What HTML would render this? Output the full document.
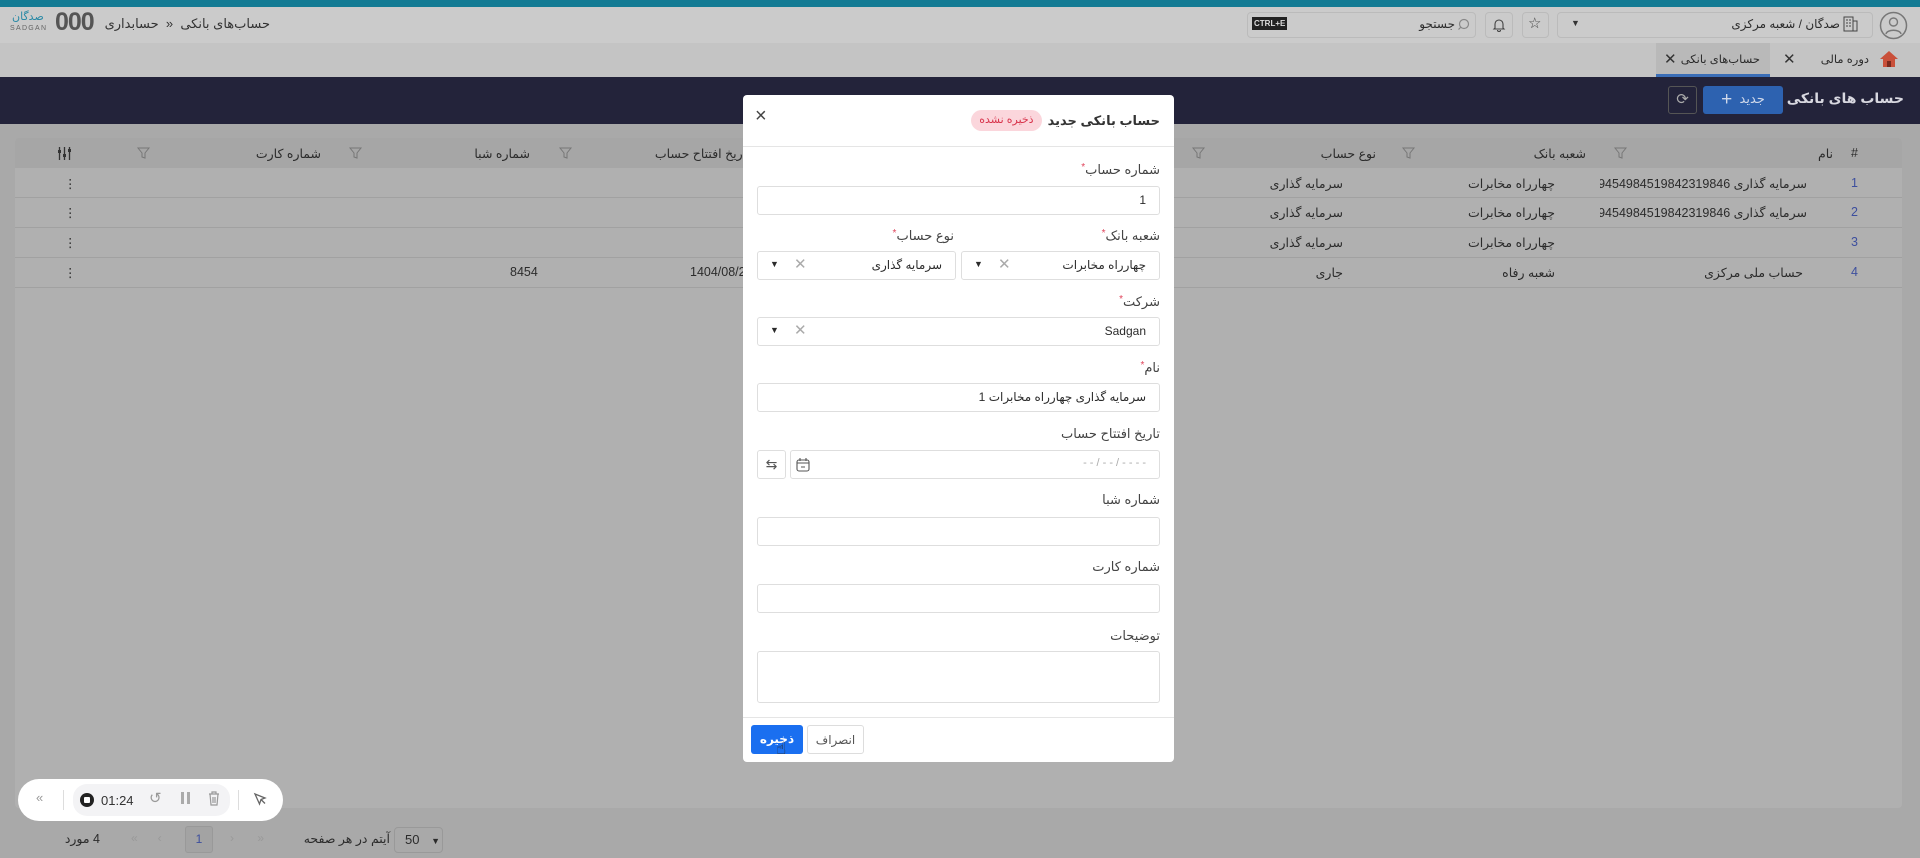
<!DOCTYPE html>
<html><head><meta charset="utf-8"><style>
*{box-sizing:border-box;margin:0;padding:0}
body{width:1920px;height:858px;overflow:hidden;position:relative;background:#a9a9a9;font-family:"Liberation Sans","DejaVu Sans","Noto Sans CJK SC",sans-serif;color:#2b2b2b;font-size:13px}
.a{position:absolute;white-space:nowrap}
.r{direction:rtl;text-align:right}
.hd{left:0;top:0;width:1920px;height:43px;background:#cbcbcb;border-top:7px solid #137b94;box-shadow:0 1px 2px rgba(0,0,0,.15)}
.tabs{left:0;top:43px;width:1920px;height:34px;background:#c4c4c4}
.band{left:0;top:77px;width:1920px;height:47px;background:#23233a}
.tbl{left:15px;top:138px;width:1887px;height:670px;background:#b0b0b0;border-radius:4px}
.th{left:15px;top:138px;width:1887px;height:30px;background:#a6a6a6;border-radius:4px 4px 0 0}
.row{left:15px;width:1887px;height:30px;border-bottom:1px solid #a1a1a1}
.c{position:absolute;white-space:nowrap;direction:rtl;font-size:12.5px}
.modal{left:743px;top:95px;width:431px;height:667px;background:#fff;border-radius:4px}
.lbl{position:absolute;right:14px;font-size:13px;color:#444;direction:rtl;white-space:nowrap}
.lbl b{color:#e0435a;font-weight:normal;font-size:10px;vertical-align:top}
.inp{position:absolute;border:1px solid #dedede;border-radius:3px;height:29px;background:#fff}
.inp span{white-space:nowrap}
.btn{position:absolute;border-radius:3px;font-size:12px;text-align:center;line-height:29px}
</style></head><body>
<div class="a hd"></div>
<!-- logo -->
<div class="a" style="left:12px;top:12px;font-size:11px;color:#2a8aa6;line-height:11px">صدگان</div>
<div class="a" style="left:10px;top:25px;font-size:7px;letter-spacing:1.3px;color:#666">SADGAN</div>
<div class="a" style="left:55px;top:8px;font-size:25px;font-weight:bold;color:#555;letter-spacing:-1px;font-family:'Liberation Sans'">000</div>
<div class="a r" style="right:1650px;top:16px;font-size:13px;color:#333">حساب‌های بانکی &nbsp;«&nbsp; حسابداری</div>
<!-- right header -->
<div class="a" style="left:1247px;top:12px;width:229px;height:26px;border:1px solid #bbb;border-radius:4px"></div>
<div class="a" style="left:1252px;top:17px;background:#222;color:#ddd;font-size:8px;padding:2px 2px;font-weight:bold">CTRL+E</div>
<div class="a r" style="right:465px;top:17px;font-size:12px">جستجو</div>
<svg class="a" style="left:1457px;top:18px" width="13" height="13" viewBox="0 0 13 13"><circle cx="7" cy="6" r="4.5" fill="none" stroke="#888" stroke-width="1.2"/><path d="M3.8 9.2 1.5 11.5" stroke="#888" stroke-width="1.2"/></svg>
<div class="a" style="left:1485px;top:12px;width:28px;height:26px;border:1px solid #bbb;border-radius:4px"></div>
<svg class="a" style="left:1492px;top:17px" width="14" height="15" viewBox="0 0 14 15"><path d="M3 11V7a4 4 0 0 1 8 0v4l1 1H2z M5.5 13a1.5 1.5 0 0 0 3 0" fill="none" stroke="#444" stroke-width="1.1"/></svg>
<div class="a" style="left:1522px;top:12px;width:27px;height:26px;border:1px solid #bbb;border-radius:4px"></div>
<div class="a" style="left:1528px;top:14px;font-size:15px;color:#444">☆</div>
<div class="a" style="left:1557px;top:12px;width:316px;height:26px;border:1px solid #bbb;border-radius:4px"></div>
<div class="a" style="left:1571px;top:18px;font-size:9px;color:#333">▼</div>
<div class="a r" style="right:80px;top:17px;font-size:12px">صدگان / شعبه مرکزی</div>
<svg class="a" style="left:1843px;top:16px" width="15" height="16" viewBox="0 0 15 16"><rect x="1" y="1" width="9" height="14" fill="none" stroke="#444"/><rect x="10" y="5" width="4" height="10" fill="none" stroke="#444"/><path d="M3 4h2M6 4h2M3 7h2M6 7h2M3 10h2M6 10h2" stroke="#444"/></svg>
<svg class="a" style="left:1879px;top:11px" width="29" height="29" viewBox="0 0 29 29"><circle cx="14.5" cy="14.5" r="13" fill="none" stroke="#777" stroke-width="1.5"/><circle cx="14.5" cy="11" r="4" fill="none" stroke="#777" stroke-width="1.4"/><path d="M7 23c1-5 14-5 15 0" fill="none" stroke="#777" stroke-width="1.4"/></svg>
<!-- tabs -->
<div class="a tabs"></div>
<div class="a" style="left:1656px;top:43px;width:114px;height:34px;background:#b9b9b9;border-bottom:3px solid #3b6eb7"></div>
<div class="a r" style="right:160px;top:52px;font-size:11.5px">حساب‌های بانکی</div>
<div class="a" style="left:1664px;top:50px;font-size:15px;color:#333">✕</div>
<div class="a r" style="right:51px;top:52px;font-size:11.5px">دوره مالی</div>
<div class="a" style="left:1783px;top:50px;font-size:15px;color:#333">✕</div>
<svg class="a" style="left:1879px;top:49px" width="20" height="20" viewBox="0 0 20 20"><path d="M10 2 1 10h3v8h12v-8h3z" fill="#c9503a"/><rect x="8" y="12" width="4" height="6" fill="#7a2a1e"/></svg>
<!-- band -->
<div class="a band"></div>
<div class="a" style="left:1703px;top:86px;width:80px;height:28px;background:#2d62b0;border-radius:3px;color:#cfd8ea;font-size:13px;line-height:26px;text-align:center;direction:rtl">جدید &nbsp;<span style="font-size:19px;vertical-align:-2px">+</span></div>
<div class="a" style="left:1668px;top:86px;width:29px;height:28px;border:1px solid #555;border-radius:3px;color:#aaa;text-align:center;line-height:26px;font-size:15px">⟳</div>
<div class="a r" style="right:16px;top:90px;font-size:14px;font-weight:bold;color:#d8d8e0;z-index:2">حساب های بانکی</div>
<!-- table -->
<div class="a tbl"></div>
<div class="a th"></div>
<div class="c" style="right:62px;top:146px">#</div>
<div class="c" style="right:87px;top:146px">نام</div>
<div class="c" style="right:334px;top:146px">شعبه بانک</div>
<div class="c" style="right:544px;top:146px">نوع حساب</div>
<div class="c" style="right:1170px;top:146px">تاریخ افتتاح حساب</div>
<div class="c" style="right:1390px;top:146px">شماره شبا</div>
<div class="c" style="right:1599px;top:146px">شماره کارت</div>
<svg class="a" style="left:57px;top:146px" width="15" height="15" viewBox="0 0 15 15"><path d="M2.5 1v13M7.5 1v13M12.5 1v13" stroke="#333" stroke-width="1.3"/><rect x="1" y="4" width="3" height="3" fill="#333"/><rect x="6" y="8" width="3" height="3" fill="#333"/><rect x="11" y="3" width="3" height="3" fill="#333"/></svg>
<svg class="a" style="left:0;top:0" width="1920" height="858"><g fill="none" stroke="#777" stroke-width="1"><path d="M1615 148h11l-4 5v5l-3-1v-4z"/><path d="M1403 148h11l-4 5v5l-3-1v-4z"/><path d="M1193 148h11l-4 5v5l-3-1v-4z"/><path d="M560 148h11l-4 5v5l-3-1v-4z"/><path d="M350 148h11l-4 5v5l-3-1v-4z"/><path d="M138 148h11l-4 5v5l-3-1v-4z"/></g></svg>
<div class="a row" style="top:168px"></div><div class="a row" style="top:198px"></div><div class="a row" style="top:228px"></div><div class="a row" style="top:258px"></div>
<div class="c" style="right:62px;top:176px;color:#3d4f9e">1</div>
<div class="a" style="left:1600px;top:170px;width:207px;height:24px;overflow:hidden"><div class="c" style="right:0;top:6px">سرمایه گذاری 39454984519842319846</div></div>
<div class="c" style="right:365px;top:176px">چهارراه مخابرات</div>
<div class="c" style="right:577px;top:176px">سرمایه گذاری</div>
<div class="c" style="right:62px;top:205px;color:#3d4f9e">2</div>
<div class="a" style="left:1600px;top:199px;width:207px;height:24px;overflow:hidden"><div class="c" style="right:0;top:6px">سرمایه گذاری 39454984519842319846</div></div>
<div class="c" style="right:365px;top:205px">چهارراه مخابرات</div>
<div class="c" style="right:577px;top:205px">سرمایه گذاری</div>
<div class="c" style="right:62px;top:235px;color:#3d4f9e">3</div>
<div class="c" style="right:365px;top:235px">چهارراه مخابرات</div>
<div class="c" style="right:577px;top:235px">سرمایه گذاری</div>
<div class="c" style="right:62px;top:265px;color:#3d4f9e">4</div>
<div class="c" style="right:117px;top:265px">حساب ملی مرکزی</div>
<div class="c" style="right:365px;top:265px">شعبه رفاه</div>
<div class="c" style="right:577px;top:265px">جاری</div>
<div class="c" style="left:690px;top:265px;direction:ltr">1404/08/20</div>
<div class="c" style="left:510px;top:265px;direction:ltr">8454</div>
<div class="c" style="left:64px;top:176px">⋮</div><div class="c" style="left:64px;top:205px">⋮</div><div class="c" style="left:64px;top:235px">⋮</div><div class="c" style="left:64px;top:265px">⋮</div>
<!-- pagination -->
<div class="a r" style="left:50px;top:831px;width:50px;font-size:12.5px">4 مورد</div>
<div class="a" style="left:131px;top:831px;color:#999;font-size:12px">«&nbsp;&nbsp;&nbsp;&nbsp;&nbsp;&nbsp;‹</div>
<div class="a" style="left:185px;top:826px;width:28px;height:27px;border:1px solid #999;border-radius:3px;background:#a3a3a3;text-align:center;line-height:25px;color:#3d4f9e;font-size:12px">1</div>
<div class="a" style="left:230px;top:831px;color:#999;font-size:12px">›&nbsp;&nbsp;&nbsp;&nbsp;&nbsp;&nbsp;&nbsp;»</div>
<div class="a r" style="right:1530px;top:831px;font-size:12.5px">آیتم در هر صفحه</div>
<div class="a" style="left:394px;top:827px;width:49px;height:26px;border:1px solid #999;border-radius:4px;font-size:13px;line-height:24px;padding-left:10px">50 <span style="font-size:9px;margin-left:8px">▼</span></div>
<!-- recorder -->
<div class="a" style="left:18px;top:779px;width:265px;height:42px;background:#fff;border-radius:21px"></div>
<div class="a" style="left:73px;top:784px;width:157px;height:32px;background:#f3f3f5;border-radius:14px"></div>
<div class="a" style="left:36px;top:790px;color:#999;font-size:13px">«</div>
<div class="a" style="left:63px;top:790px;width:1px;height:20px;background:#ddd"></div>
<div class="a" style="left:238px;top:790px;width:1px;height:20px;background:#ddd"></div>
<div class="a" style="left:80px;top:793px;width:14px;height:14px;border-radius:50%;background:#222"><div style="margin:4px;width:6px;height:6px;background:#fff;border-radius:1px"></div></div>
<div class="a" style="left:101px;top:793px;font-size:13px;color:#333">01:24</div>
<div class="a" style="left:149px;top:789px;font-size:15px;color:#999">↺</div>
<div class="a" style="left:181px;top:792px;width:3px;height:12px;background:#aaa"></div><div class="a" style="left:187px;top:792px;width:3px;height:12px;background:#aaa"></div>
<svg class="a" style="left:208px;top:791px" width="12" height="15" viewBox="0 0 12 15"><path d="M1 3h10M4 3V1h4v2M2 3l1 11h6l1-11M5 6v6M7 6v6" fill="none" stroke="#999" stroke-width="1.2"/></svg>
<svg class="a" style="left:253px;top:792px" width="14" height="14" viewBox="0 0 14 14"><path d="M2 2l10 4-4 1.5L6.5 12z M8 7.5l4 4" fill="none" stroke="#666" stroke-width="1.3"/></svg>
<!-- modal -->
<div class="a modal">
 <div class="a" style="right:14px;top:15px;display:flex;flex-direction:row-reverse;align-items:center;gap:6px;direction:ltr">
  <span style="font-size:13px;font-weight:bold;color:#333;direction:rtl">حساب بانکی جدید</span>
  <span style="height:21px;padding:0 8px;background:#fbd6dc;border-radius:11px;color:#d8344c;font-size:11px;line-height:21px;direction:rtl">ذخیره نشده</span>
 </div>
 <div class="a" style="left:12px;top:10px;font-size:20px;color:#444">×</div>
 <div class="a" style="left:0;top:51px;width:431px;height:1px;background:#e5e5e5"></div>
 <div class="lbl" style="top:67px">شماره حساب<b>*</b></div>
 <div class="inp" style="left:14px;top:91px;width:403px"><span style="position:absolute;right:13px;top:6px;font-size:12px">1</span></div>
 <div class="lbl" style="top:133px">شعبه بانک<b>*</b></div>
 <div class="lbl" style="top:133px;right:220px">نوع حساب<b>*</b></div>
 <div class="inp" style="left:218px;top:156px;width:199px"><span style="position:absolute;right:13px;top:6px;font-size:12px;direction:rtl">چهارراه مخابرات</span><span style="position:absolute;left:36px;top:3px;color:#aaa;font-size:15px">✕</span><span style="position:absolute;left:12px;top:7px;font-size:9px">▼</span></div>
 <div class="inp" style="left:14px;top:156px;width:199px"><span style="position:absolute;right:13px;top:6px;font-size:12px;direction:rtl">سرمایه گذاری</span><span style="position:absolute;left:36px;top:3px;color:#aaa;font-size:15px">✕</span><span style="position:absolute;left:12px;top:7px;font-size:9px">▼</span></div>
 <div class="lbl" style="top:199px">شرکت<b>*</b></div>
 <div class="inp" style="left:14px;top:222px;width:403px"><span style="position:absolute;right:13px;top:6px;font-size:12px">Sadgan</span><span style="position:absolute;left:36px;top:3px;color:#aaa;font-size:15px">✕</span><span style="position:absolute;left:12px;top:7px;font-size:9px">▼</span></div>
 <div class="lbl" style="top:265px">نام<b>*</b></div>
 <div class="inp" style="left:14px;top:288px;width:403px"><span style="position:absolute;right:13px;top:6px;font-size:12px;direction:rtl">سرمایه گذاری چهارراه مخابرات 1</span></div>
 <div class="lbl" style="top:331px">تاریخ افتتاح حساب</div>
 <div class="inp" style="left:14px;top:355px;width:29px;text-align:center;font-size:14px;line-height:26px;color:#555">⇆</div>
 <div class="inp" style="left:47px;top:355px;width:370px"><span style="position:absolute;right:13px;top:6px;font-size:11px;color:#aaa">- - / - - / - - - -</span>
 <svg style="position:absolute;left:5px;top:6px" width="14" height="15" viewBox="0 0 14 15"><rect x="1" y="3" width="12" height="11" rx="2" fill="none" stroke="#555" stroke-width="1.1"/><path d="M1 6h12M4 1v3M10 1v3M5 10h4" stroke="#555" stroke-width="1.1"/></svg></div>
 <div class="lbl" style="top:397px">شماره شبا</div>
 <div class="inp" style="left:14px;top:422px;width:403px"></div>
 <div class="lbl" style="top:464px">شماره کارت</div>
 <div class="inp" style="left:14px;top:489px;width:403px"></div>
 <div class="lbl" style="top:533px">توضیحات</div>
 <div class="inp" style="left:14px;top:556px;width:403px;height:52px"></div>
 <div class="a" style="left:0;top:622px;width:431px;height:1px;background:#e5e5e5"></div>
 <div class="btn" style="left:8px;top:630px;width:52px;height:29px;background:#1a6ff0;color:#fff;font-weight:bold">ذخیره</div>
 <div class="btn" style="left:64px;top:630px;width:57px;height:29px;border:1px solid #ddd;color:#555">انصراف</div>
 <div class="a" style="left:33px;top:644px;font-size:17px">☝</div>
</div>
</body></html>
